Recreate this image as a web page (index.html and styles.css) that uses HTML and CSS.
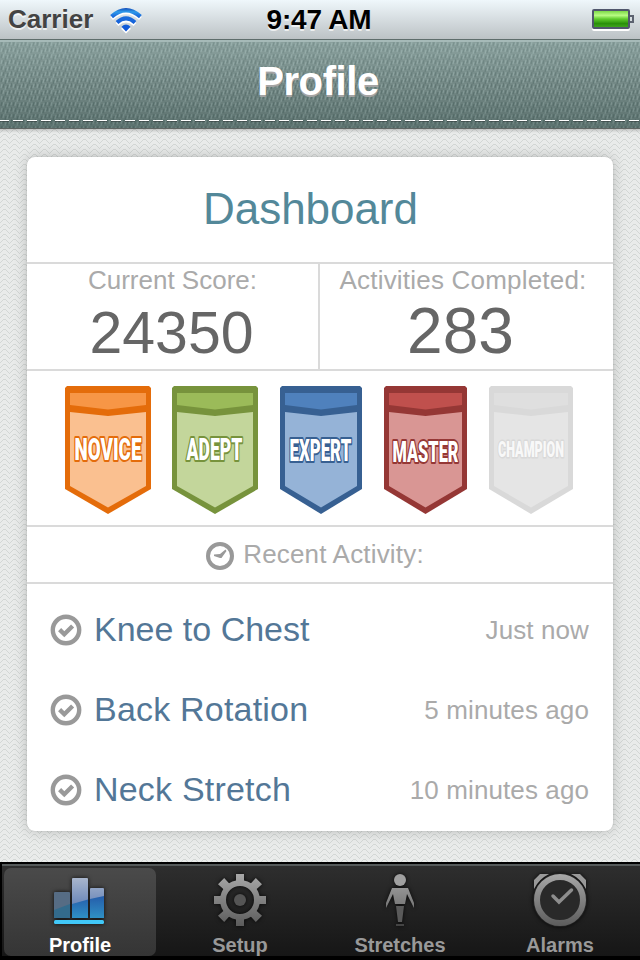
FILE: index.html
```html
<!DOCTYPE html>
<html lang="en">
<head>
    <meta charset="UTF-8">
    <meta name="viewport" content="width=device-width, initial-scale=1.0">
    <title>Profile</title>
    <link rel="stylesheet" href="styles.css">
</head>
<body>
    <!-- status bar -->
    <div class="status">
        <div class="carrier">
            <span>Carrier</span>
            <svg class="wifi" width="34" height="26" viewBox="0 0 34 26">
                <defs>
                    <linearGradient id="wifiBlue" x1="0" y1="0" x2="0" y2="26" gradientUnits="userSpaceOnUse">
                        <stop offset="0" stop-color="#1049b8"/>
                        <stop offset=".15" stop-color="#2f9ceb"/>
                        <stop offset=".3" stop-color="#1d6fdc"/>
                        <stop offset="1" stop-color="#0a4fd6"/>
                    </linearGradient>
                </defs>
                <g fill="none" stroke="#fff" stroke-width="4" transform="translate(0 2)">
                    <path d="M2.600 8.600Q17 -4.200 31.400 8.600"/>
                    <path d="M8 14.400Q17 6.200 26 14.400"/>
                    <path fill="#fff" stroke="none" d="M12 18.700Q17 14.500 22 18.700L17 23.600Z"/>
                </g>
                <path fill="none" stroke="url(#wifiBlue)" stroke-width="4.200" d="M2.600 8.600Q17 -4.200 31.400 8.600"/>
                <path fill="none" stroke="url(#wifiBlue)" stroke-width="4" d="M8 14.400Q17 6.200 26 14.400"/>
                <path fill="url(#wifiBlue)" d="M12.500 18.700Q17 14.500 21.500 18.700L17 23.600Z"/>
            </svg>
        </div>
        <span class="time">9:47 AM</span>
        <svg class="battery" width="42" height="22" viewBox="0 0 42 22">
            <defs>
                <linearGradient id="charge" x1="0" y1="0" x2="0" y2="1">
                    <stop offset="0" stop-color="#6fd23a"/>
                    <stop offset=".3" stop-color="#b8fb83"/>
                    <stop offset=".5" stop-color="#5fcc2c"/>
                    <stop offset=".75" stop-color="#2a900b"/>
                    <stop offset="1" stop-color="#43a921"/>
                </linearGradient>
            </defs>
            <rect x="1" y="3" width="36" height="18" rx="1" fill="none" stroke="#fff" stroke-width="2"/>
            <rect x="1" y="1" width="36" height="18" rx="1" fill="url(#charge)" stroke="#50566c" stroke-width="2"/>
            <path d="M38 7h3v6h-3" fill="none" stroke="#5c6270" stroke-width="2"/>
        </svg>
    </div>

    <header class="navbar">
        <h1>Profile</h1>
    </header>

    <main>
        <div class="card">
            <h2>Dashboard</h2>

            <div class="stats">
                <div class="stat">
                    <div class="label">Current Score:</div>
                    <div class="score">24350</div>
                </div>
                <div class="stat activities">
                    <div class="label">Activities Completed:</div>
                    <div class="count">283</div>
                </div>
            </div>

            <!-- levels -->
            <div class="badges">
                <svg class="badge novice" width="86" height="128" viewBox="0 0 86 128">
                    <path class="edge" d="M2 0H84L86 2V103L43 128L0 103V2Z"/>
                    <path class="flap" d="M5 7H81V19L43 23.500L5 19Z"/>
                    <path class="cloth" d="M5 26L43 30L81 26V100L43 121.500L5 100Z"/>
                    <text transform="translate(9.500 74) scale(.62 1)" font-size="32" textLength="108" lengthAdjust="spacingAndGlyphs">NOVICE</text>
                </svg>
                <svg class="badge adept" width="86" height="128" viewBox="0 0 86 128">
                    <path class="edge" d="M2 0H84L86 2V103L43 128L0 103V2Z"/>
                    <path class="flap" d="M5 7H81V19L43 23.500L5 19Z"/>
                    <path class="cloth" d="M5 26L43 30L81 26V100L43 121.500L5 100Z"/>
                    <text transform="translate(14.500 74) scale(.62 1)" font-size="32" textLength="90" lengthAdjust="spacingAndGlyphs">ADEPT</text>
                </svg>
                <svg class="badge expert" width="82" height="128" viewBox="0 0 82 128">
                    <path class="edge" d="M2 0H80L82 2V103L41 128L0 103V2Z"/>
                    <path class="flap" d="M5 7H77V19L41 23.500L5 19Z"/>
                    <path class="cloth" d="M5 26L41 30L77 26V100L41 121.500L5 100Z"/>
                    <text transform="translate(9.500 75) scale(.6 1)" font-size="32" textLength="103" lengthAdjust="spacingAndGlyphs">EXPERT</text>
                </svg>
                <svg class="badge master" width="83" height="128" viewBox="0 0 83 128">
                    <path class="edge" d="M2 0H81L83 2V103L41.500 128L0 103V2Z"/>
                    <path class="flap" d="M5 7H78V19L41.500 23.500L5 19Z"/>
                    <path class="cloth" d="M5 26L41.500 30L78 26V100L41.500 121.500L5 100Z"/>
                    <text transform="translate(8.500 76) scale(.6 1)" font-size="29" textLength="110" lengthAdjust="spacingAndGlyphs">MASTER</text>
                </svg>
                <svg class="badge champion" width="84" height="128" viewBox="0 0 84 128">
                    <path class="edge" d="M2 0H82L84 2V103L42 128L0 103V2Z"/>
                    <path class="flap" d="M5 7H79V19L42 23.500L5 19Z"/>
                    <path class="cloth" d="M5 26L42 30L79 26V100L42 121.500L5 100Z"/>
                    <text transform="translate(9 71) scale(.6 1)" font-size="22" textLength="110" lengthAdjust="spacingAndGlyphs">CHAMPION</text>
                </svg>
            </div>

            <div class="recent">
                <svg width="28" height="28" viewBox="0 0 28 28">
                    <circle cx="14" cy="14" r="12" fill="none" stroke="#999" stroke-width="4"/>
                    <path d="M8 12.500L14 12L19.500 7.500L20.500 9L15.500 16H14L8 14Z" fill="#999"/>
                </svg>
                <span>Recent Activity:</span>
            </div>

            <ul class="list">
                <li>
                    <svg width="32" height="32" viewBox="0 0 32 32">
                        <circle cx="16" cy="16" r="13.200" fill="none" stroke="#999" stroke-width="4.400"/>
                        <path d="M9.600 15.600L14.300 20.200L22.600 12" fill="none" stroke="#999" stroke-width="4.400"/>
                    </svg>
                    <span class="name">Knee to Chest</span>
                    <span class="ago">Just now</span>
                </li>
                <li>
                    <svg width="32" height="32" viewBox="0 0 32 32">
                        <circle cx="16" cy="16" r="13.200" fill="none" stroke="#999" stroke-width="4.400"/>
                        <path d="M9.600 15.600L14.300 20.200L22.600 12" fill="none" stroke="#999" stroke-width="4.400"/>
                    </svg>
                    <span class="name wide">Back Rotation</span>
                    <span class="ago">5 minutes ago</span>
                </li>
                <li>
                    <svg width="32" height="32" viewBox="0 0 32 32">
                        <circle cx="16" cy="16" r="13.200" fill="none" stroke="#999" stroke-width="4.400"/>
                        <path d="M9.600 15.600L14.300 20.200L22.600 12" fill="none" stroke="#999" stroke-width="4.400"/>
                    </svg>
                    <span class="name wide">Neck Stretch</span>
                    <span class="ago">10 minutes ago</span>
                </li>
            </ul>
        </div>
    </main>

    <!-- tab bar -->
    <nav class="tabs">
        <a class="tab active">
            <svg width="52" height="52" viewBox="0 0 52 52">
                <defs>
                    <linearGradient id="barTop" x1="0" y1="4" x2="0" y2="44" gradientUnits="userSpaceOnUse">
                        <stop offset="0" stop-color="#a9b6cd"/>
                        <stop offset="1" stop-color="#4a6fae"/>
                    </linearGradient>
                    <linearGradient id="barLow" x1="0" y1="20" x2="0" y2="44" gradientUnits="userSpaceOnUse">
                        <stop offset="0" stop-color="#2458a8"/>
                        <stop offset="1" stop-color="#2f90c4"/>
                    </linearGradient>
                </defs>
                <rect x="0" y="18" width="16" height="26" rx="1" fill="#566c84"/>
                <path d="M0 36L16 30V44H0Z" fill="#336b8c"/>
                <rect x="18" y="4" width="16" height="40" rx="1" fill="url(#barTop)"/>
                <path d="M18 30L34 25.500V44H18Z" fill="url(#barLow)"/>
                <rect x="36" y="14" width="14" height="30" rx="1" fill="url(#barTop)"/>
                <path d="M36 25L50 22V44H36Z" fill="url(#barLow)"/>
                <rect x="0" y="46" width="50" height="4" rx="1.500" fill="#41c8f8"/>
            </svg>
            <span>Profile</span>
        </a>
        <a class="tab">
            <svg width="52" height="52" viewBox="-26 -26 52 52">
                <defs>
                    <linearGradient id="metal" x1="0" y1="-26" x2="0" y2="26" gradientUnits="userSpaceOnUse">
                        <stop offset="0" stop-color="#a8a8a8"/>
                        <stop offset="1" stop-color="#5c5c5c"/>
                    </linearGradient>
                </defs>
                <path fill="url(#metal)" fill-rule="evenodd" d="M-4 -26H4V-19.600A20 20 0 0 1 11 -16.700L15.800 -22L22 -15.800L16.700 -11A20 20 0 0 1 19.600 -4H26V4H19.600A20 20 0 0 1 16.700 11L22 15.800L15.800 22L11 16.700A20 20 0 0 1 4 19.600V26H-4V19.600A20 20 0 0 1 -11 16.700L-15.800 22L-22 15.800L-16.700 11A20 20 0 0 1 -19.600 4H-26V-4H-19.600A20 20 0 0 1 -16.700 -11L-22 -15.800L-15.800 -22L-11 -16.700A20 20 0 0 1 -4 -19.600ZM0 -14A14 14 0 1 0 0 14A14 14 0 1 0 0 -14Z"/>
                <circle r="6" fill="#555"/>
            </svg>
            <span>Setup</span>
        </a>
        <a class="tab">
            <svg width="52" height="52" viewBox="-26 -26 52 52">
                <circle cx="0" cy="-20" r="6" fill="#a0a0a0"/>
                <path d="M-8 -12H8L14 3V8L7 -6L5 4H-5L-7 -6L-14 8V3Z" fill="url(#metal)"/>
                <path d="M-4 6H4L2 22H-2Z" fill="#5a5a5a"/>
                <rect x="-4" y="24" width="8" height="2" fill="#444"/>
            </svg>
            <span>Stretches</span>
        </a>
        <a class="tab">
            <svg width="52" height="52" viewBox="-26 -26 52 52">
                <path d="M-26 -11V-20L-20 -26H-11Q-21 -21 -26 -11ZM26 -11V-20L20 -26H11Q21 -21 26 -11Z" fill="#999"/>
                <circle r="24.500" fill="none" stroke="#222" stroke-width="5"/>
                <circle r="23" fill="#292929" stroke="url(#metal)" stroke-width="6"/>
                <path d="M-7 -4L-1 2L11.500 -10" fill="none" stroke="#8d8d8d" stroke-width="3.500" stroke-linecap="round"/>
            </svg>
            <span>Alarms</span>
        </a>
    </nav>
</body>
</html>
```

FILE: styles.css
```css
* {
    box-sizing: border-box;
}
body {
    margin: 0;
    width: 640px;
    height: 960px;
    display: flex;
    flex-direction: column;
    overflow: hidden;
    background: #000;
    font-family: "Liberation Sans", Arial, sans-serif;
}
h1, h2, ul {
    margin: 0;
    padding: 0;
    font-weight: normal;
}
svg {
    display: block;
    flex: none;
    overflow: visible;
}

/* status bar */
.status {
    height: 40px;
    flex: none;
    display: grid;
    grid-template-columns: 1fr auto 1fr;
    align-items: center;
    padding: 0 6px 0 8px;
    background: linear-gradient(#eff7fb, #bcc2c5);
    border-bottom: 1px solid #5f6d6c;
    font-weight: bold;
    text-shadow: 0 2px 0 rgba(255, 255, 255, 0.7);
}
.carrier {
    display: flex;
    align-items: center;
    gap: 16px;
    font-size: 26px;
    color: #434343;
}
.wifi {
    margin-top: 2px;
}
.time {
    font-size: 28px;
    letter-spacing: -0.2px;
    padding-right: 4px;
    color: #000;
}
.battery {
    justify-self: end;
}

/* denim header with a stitched seam */
.navbar {
    height: 89px;
    flex: none;
    display: flex;
    flex-direction: column;
    background:
        linear-gradient(rgba(145, 168, 165, 0.75), rgba(115, 136, 133, 0.65) 50%, rgba(84, 106, 103, 0.75)),
        url("data:image/svg+xml,%3Csvg xmlns='http://www.w3.org/2000/svg' width='12' height='12'%3E%3Crect width='12' height='12' fill='%23738885'/%3E%3Cpath d='M2 0l-1 4M6 2l-1 4M10 0l-1 4M4 6l-1 4M8 7l-1 4M12 5l-1 4' stroke='%233c5552' stroke-width='1.200'/%3E%3Cpath d='M4 0l-1 4M8 1l-1 4M12 0l-1 3M2 6l-1 4M6 8l-1 4M10 6l-1 4' stroke='%23b3cac7' stroke-width='1.100'/%3E%3C/svg%3E");
    border-top: 2px solid #a6bab8;
    border-bottom: 1px solid #5f6563;
}
.navbar h1 {
    height: 79px;
    line-height: 79px;
    padding-right: 4px;
    text-align: center;
    font-size: 40px;
    font-weight: bold;
    letter-spacing: -0.4px;
    color: #fff;
    text-shadow: 0 2px 0 #a4a4a4;
}
.navbar::after {
    content: "";
    height: 2px;
    margin-left: -1px;
    margin-top: -1px;
    background:
        repeating-linear-gradient(90deg, #fff 0 10px, transparent 10px 14px) 0 0 / 100% 1px no-repeat,
        repeating-linear-gradient(90deg, rgba(50, 60, 60, 0.6) 0 10px, transparent 10px 14px) 0 1px / 100% 1px no-repeat;
}

main {
    height: 733px;
    flex: none;
    padding: 28px 27px 0;
    background:
        linear-gradient(rgba(0, 0, 0, 0.16), transparent 4px),
        url("data:image/svg+xml,%3Csvg xmlns='http://www.w3.org/2000/svg' width='10' height='5' shape-rendering='crispEdges'%3E%3Crect width='10' height='5' fill='%23e9ebea'/%3E%3Cpath d='M0 3h1v1h-1zM1 2h1v1h-1zM2 1h1v1h-1zM3 0h3v1h-3zM6 1h1v1h-1zM7 2h1v1h-1zM8 3h1v1h-1zM9 4h1v1h-1z' fill='%23d3d7d5'/%3E%3C/svg%3E");
}
.card {
    height: 674px;
    background: #fff;
    border-radius: 8px;
    box-shadow: 0 0 14px rgba(0, 0, 0, 0.2), 0 0 2px rgba(0, 0, 0, 0.12);
}
.card h2 {
    height: 107px;
    line-height: 104px;
    border-bottom: 2px solid #dadada;
    text-align: center;
    font-size: 44px;
    letter-spacing: -0.05px;
    padding-right: 19px;
    color: #538899;
}

.stats {
    height: 107px;
    display: flex;
    border-bottom: 2px solid #dadada;
    text-align: center;
}
.stat {
    width: 291px;
}
.activities {
    width: 295px;
    padding-right: 7px;
    border-left: 2px solid #dadada;
}
.activities .label {
    letter-spacing: 0.2px;
}
.label {
    line-height: 32px;
    font-size: 26px;
    color: #aaa;
}
.score, .count {
    color: #666;
}
.score {
    line-height: 75px;
    font-size: 59px;
    padding-right: 2px;
}
.count {
    line-height: 70px;
    font-size: 64px;
    padding-right: 5px;
}

/* badges */
.badges {
    height: 156px;
    display: flex;
    gap: 22px;
    padding: 15px 0 0 38px;
    border-bottom: 2px solid #dadada;
}
.badge.adept {
    margin-left: -1px;
}
.badge text {
    font-family: Roboto, "Liberation Sans", sans-serif;
    font-weight: 900;
    fill: #fff;
    stroke-width: 4px;
    stroke-linejoin: round;
    paint-order: stroke;
}
.novice .edge { fill: #e46c0a; }
.novice .flap { fill: #f79646; }
.novice .cloth { fill: #fac090; }
.novice text { stroke: #e46c0a; }
.adept .edge { fill: #77933c; }
.adept .flap { fill: #9bbb59; }
.adept .cloth { fill: #c3d69b; }
.adept text { stroke: #77933c; }
.expert .edge { fill: #376092; }
.expert .flap { fill: #4f81bd; }
.expert .cloth { fill: #95b3d7; }
.expert text { stroke: #376092; }
.master .edge { fill: #953735; }
.master .flap { fill: #c0504d; }
.master .cloth { fill: #d99694; }
.master text { stroke: #953735; }
.champion .edge { fill: #d9d9d9; }
.champion .flap { fill: #dfdfdf; }
.champion .cloth { fill: #e5e5e5; }
.champion text { fill: #f8f8f8; stroke: #d9d9d9; stroke-width: 3px; }

.recent {
    height: 57px;
    display: flex;
    align-items: center;
    justify-content: center;
    gap: 9px;
    padding-right: 10px;
    border-bottom: 2px solid #dadada;
    font-size: 26px;
    letter-spacing: 0.18px;
    color: #aaa;
}
.recent svg {
    margin-top: 3px;
}

.list {
    list-style: none;
    padding: 6px 24px 0 23px;
}
.list li {
    height: 80px;
    display: flex;
    align-items: center;
}
.name {
    flex: 1;
    margin-left: 12px;
    margin-top: -1px;
    font-size: 34px;
    color: #537797;
}
.name.wide {
    letter-spacing: 0.2px;
}
.ago {
    font-size: 26px;
    letter-spacing: 0.1px;
    color: #aaa;
}

/* tab bar */
.tabs {
    height: 98px;
    flex: none;
    display: grid;
    grid-template-columns: repeat(4, 160px);
    padding-top: 4px;
    border-top: 2px solid #000;
    border-bottom: 4px solid #000;
    background: linear-gradient(#555a5a 2px, #2e2e2e 2px, #161616);
    box-shadow: inset 2px 0 0 #000;
}
.tab {
    display: flex;
    flex-direction: column;
    align-items: center;
    padding-top: 6px;
    color: #999;
    font-size: 20px;
    font-weight: bold;
    line-height: 22px;
}
.tab svg {
    margin-bottom: 8px;
    filter: drop-shadow(0 0 2px rgba(0, 0, 0, 0.8));
}
.tab.active {
    color: #fff;
    margin: 0 4px;
    border-radius: 7px;
    background: linear-gradient(#4a4a4a, #353535);
}
```
